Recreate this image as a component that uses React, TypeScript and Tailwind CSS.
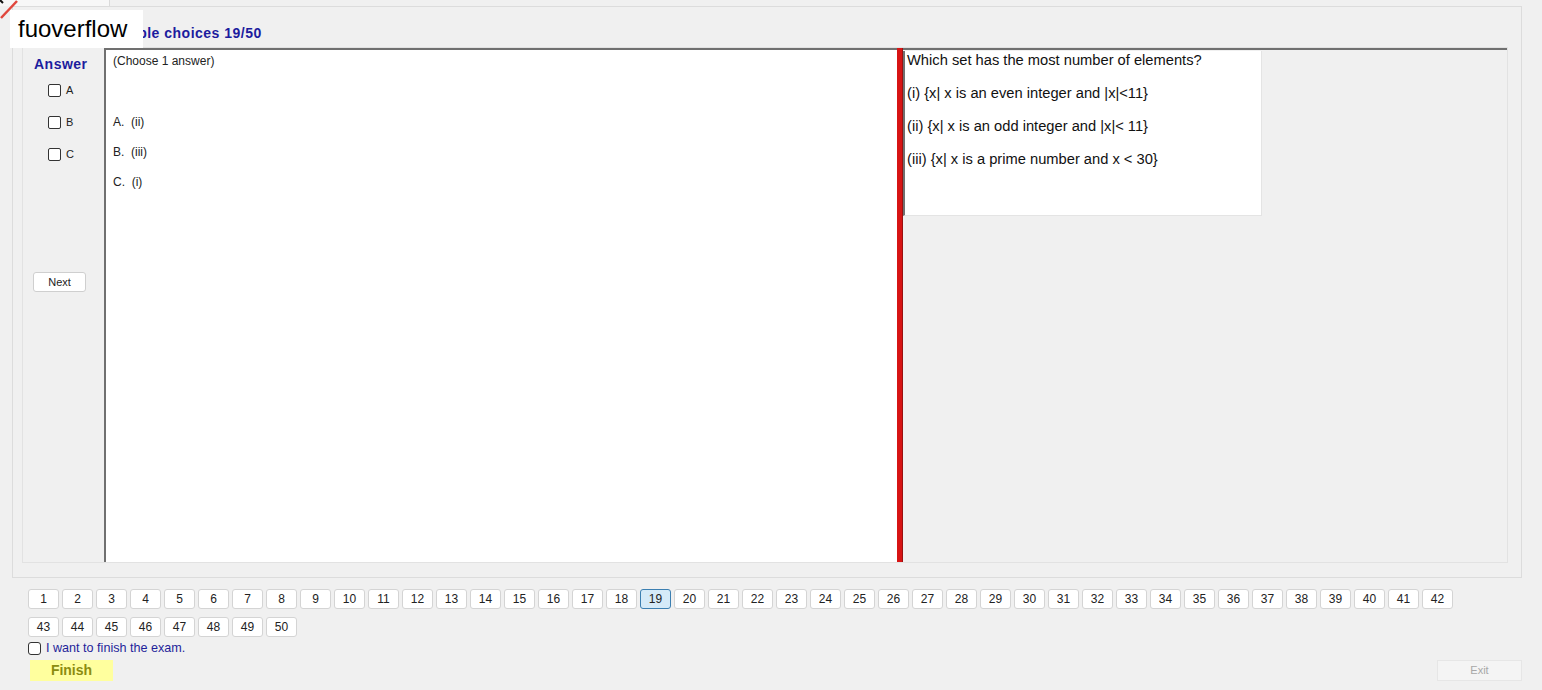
const nums = Array.from({ length: 50 }, (_, i) => i + 1);

function NumButton({ n }: { n: number }) {
  const active = n === 19;
  return (
    <button
      className={
        active
          ? "w-[31px] h-[20px] rounded-[3px] border border-[#3c7fb1] bg-[#d5eaf8] text-[12px] text-[#222] leading-none"
          : "w-[31px] h-[20px] rounded-[3px] border border-[#d4d4d4] bg-white text-[12px] text-[#222] leading-none"
      }
    >
      {n}
    </button>
  );
}

function Check({ label }: { label: string }) {
  return (
    <div className="flex items-center gap-[5px] pl-[25px] h-[13px]">
      <span className="w-[13px] h-[13px] rounded-[2px] border border-[#333] bg-white" />
      <span className="text-[11px] text-[#222]">{label}</span>
    </div>
  );
}

export default function App() {
  return (
    <div
      className="relative w-[1542px] h-[690px] overflow-hidden bg-[#f0f0f0]"
      style={{ fontFamily: '"Liberation Sans", Arial, sans-serif' }}
    >
      {/* tab strip */}
      <div className="w-[110px] h-[6px] bg-[#f7f7f7] border-r border-[#dadada]" />

      {/* outer panel */}
      <div className="ml-[12px] mr-[20px] h-[572px] border border-[#dcdcdc] bg-[#f0f0f0] flex flex-col">
        <div className="h-[40px] pl-[90px] pt-[19px] text-[14px] tracking-[0.5px] font-bold text-[#1c1c9e] leading-none">
          Multiple choices 19/50
        </div>

        <div className="ml-[9px] mr-[13px] h-[516px] border border-[#e2e2e2] flex">
          {/* answer column */}
          <div className="w-[81px] shrink-0 flex flex-col">
            <div className="pl-[11px] pt-[9px] text-[14px] tracking-[0.5px] font-bold text-[#1c1c9e] leading-none">Answer</div>
            <div className="flex flex-col gap-[19px] pt-[13px]">
              <Check label="A" />
              <Check label="B" />
              <Check label="C" />
            </div>
            <button className="ml-[10px] mt-[111px] w-[53px] h-[20px] rounded-[3px] border border-[#cfcfcf] bg-white text-[11px] text-[#222]">
              Next
            </button>
          </div>

          {/* options panel */}
          <div className="w-[793px] shrink-0 bg-white border-l-2 border-t-2 border-[#707070] pl-[7px] pt-[4px] text-[12px] text-[#222]">
            <div className="leading-[14px]">(Choose 1 answer)</div>
            <div className="flex flex-col gap-[16px] pt-[47px] leading-[14px]">
              <div>A.&nbsp; (ii)</div>
              <div>B.&nbsp; (iii)</div>
              <div>C.&nbsp; (i)</div>
            </div>
          </div>

          <div className="w-[6px] shrink-0 bg-[#d71414] border-r border-[#9a1010]" />

          {/* question panel */}
          <div className="flex-1 border-t-2 border-[#707070] pt-[1px]">
            <div className="w-[359px] h-[165px] bg-white border-l-2 border-[#707070] border-b border-r border-b-[#e4e4e4] border-r-[#e4e4e4] pl-[2px] pt-[1px] text-[14.7px] text-[#111] leading-[16px] flex flex-col gap-[17px]">
              <div>Which set has the most number of elements?</div>
              <div>(i) {"{x| x is an even integer and |x|<11}"}</div>
              <div>(ii) {"{x| x is an odd integer and |x|< 11}"}</div>
              <div>(iii) {"{x| x is a prime number and x < 30}"}</div>
            </div>
          </div>
        </div>
      </div>

      {/* question navigator */}
      <div className="pl-[28px] pt-[11px] flex flex-col">
        <div className="flex flex-wrap gap-x-[3px] gap-y-[8px] w-[1440px]">
          {nums.map((n) => (
            <NumButton key={n} n={n} />
          ))}
        </div>
        <div className="flex items-center gap-[5px] mt-[4px] h-[14px]">
          <span className="w-[13px] h-[13px] rounded-[3px] border border-[#333] bg-white" />
          <span className="text-[12.6px] text-[#1f1f9a]">I want to finish the exam.</span>
        </div>
        <div className="flex justify-between items-center mt-[5px] pr-[20px]">
          <button className="ml-[2px] w-[83px] h-[21px] bg-[#ffff9e] text-[14px] font-bold text-[#8c8c10]">
            Finish
          </button>
          <button className="w-[85px] h-[21px] border border-[#e6e6e6] bg-[#f4f4f4] text-[11px] text-[#a8a8a8]">
            Exit
          </button>
        </div>
      </div>

      {/* corner mark */}
      <svg className="absolute left-0 top-0" width="20" height="20" viewBox="0 0 20 20">
        <line x1="1" y1="18" x2="17" y2="1" stroke="#e0463c" strokeWidth="2.5" />
        <line x1="0" y1="0" x2="3" y2="3" stroke="#111" strokeWidth="2" />
      </svg>

      {/* watermark */}
      <div className="absolute left-[10px] top-[10px] w-[133px] h-[38px] bg-white flex items-center pl-[8px] text-[24px] text-black">
        fuoverflow
      </div>
    </div>
  );
}
